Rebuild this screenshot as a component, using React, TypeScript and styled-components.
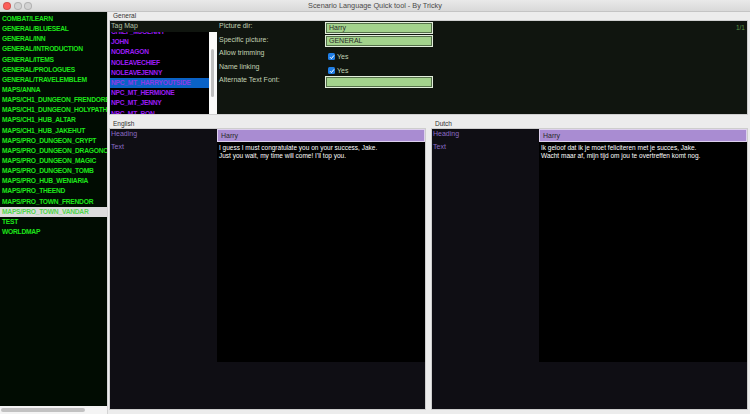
import styled, { createGlobalStyle } from "styled-components";

const GlobalStyle = createGlobalStyle`
	html, body {
		margin: 0;
		padding: 0;
		background: #ececec;
		overflow: hidden;
	}
	* {
		box-sizing: border-box;
	}
`;

const maps = [
	"COMBAT/LEARN",
	"GENERAL/BLUESEAL",
	"GENERAL/INN",
	"GENERAL/INTRODUCTION",
	"GENERAL/ITEMS",
	"GENERAL/PROLOGUES",
	"GENERAL/TRAVELEMBLEM",
	"MAPS/ANNA",
	"MAPS/CH1_DUNGEON_FRENDORBORDER",
	"MAPS/CH1_DUNGEON_HOLYPATH",
	"MAPS/CH1_HUB_ALTAR",
	"MAPS/CH1_HUB_JAKEHUT",
	"MAPS/PRO_DUNGEON_CRYPT",
	"MAPS/PRO_DUNGEON_DRAGONCAVE",
	"MAPS/PRO_DUNGEON_MAGIC",
	"MAPS/PRO_DUNGEON_TOMB",
	"MAPS/PRO_HUB_WENIARIA",
	"MAPS/PRO_THEEND",
	"MAPS/PRO_TOWN_FRENDOR",
	"MAPS/PRO_TOWN_VANDAR",
	"TEST",
	"WORLDMAP",
];

const tags = [
	"CHIEF_MJGENNY",
	"JOHN",
	"NODRAGON",
	"NOLEAVECHIEF",
	"NOLEAVEJENNY",
	"NPC_MT_HARRYOUTSIDE",
	"NPC_MT_HERMIONE",
	"NPC_MT_JENNY",
	"NPC_MT_RON",
];

const Window = styled.div`
	width: 750px;
	height: 414px;
	display: flex;
	flex-direction: column;
	font-family: "Liberation Sans", Arial, sans-serif;
	background: #ececec;
`;

const TitleBar = styled.div`
	height: 12px;
	display: grid;
	grid-template-columns: 60px 1fr 60px;
	align-items: center;
	background: linear-gradient(#e9e9e9, #d9d9d9);
	border-bottom: 1px solid #c4c4c4;
`;

const Lights = styled.div`
	display: flex;
	gap: 2.5px;
	padding-left: 3px;
`;

const Light = styled.span<{ $color: string }>`
	width: 8px;
	height: 8px;
	border-radius: 50%;
	background: ${(p) => p.$color};
	border: 0.5px solid rgba(0, 0, 0, 0.15);
`;

const Title = styled.div`
	text-align: center;
	font-size: 7.3px;
	color: #4a4a4a;
`;

const Body = styled.div`
	flex: 1;
	display: flex;
	min-height: 0;
`;

const Sidebar = styled.div`
	width: 108px;
	display: flex;
	flex-direction: column;
	border-right: 1px solid #d4d4d4;
`;

const MapList = styled.div`
	flex: 1;
	background: #010c02;
	padding-top: 2px;
	overflow: hidden;
`;

const MapItem = styled.div<{ $selected?: boolean }>`
	height: 10.15px;
	line-height: 10.15px;
	padding-left: 2px;
	font-size: 6.7px;
	letter-spacing: -0.25px;
	font-weight: bold;
	white-space: nowrap;
	overflow: hidden;
	color: ${(p) => (p.$selected ? "#52d64e" : "#1ee61a")};
	background: ${(p) => (p.$selected ? "#dcdcdc" : "transparent")};
`;

const HScroll = styled.div`
	height: 8px;
	background: #f4f4f4;
	padding: 2px 20px 2px 1px;
`;

const HThumb = styled.div`
	width: 84px;
	height: 4px;
	border-radius: 2px;
	background: #c2c2c2;
`;

const Main = styled.div`
	flex: 1;
	display: flex;
	flex-direction: column;
	padding: 0 2px 4px 1px;
	min-width: 0;
`;

const TabLabel = styled.div`
	height: 8px;
	font-size: 6.5px;
	line-height: 8px;
	color: #333;
	padding-left: 4px;
`;

const GeneralPanel = styled.div`
	height: 95px;
	display: flex;
	background: #10150f;
	border: 1px solid #cfcfcf;
	position: relative;
`;

const TagColumn = styled.div`
	width: 107px;
	display: flex;
	flex-direction: column;
`;

const TagHeader = styled.div`
	height: 11px;
	font-size: 7px;
	line-height: 10px;
	color: #b4c2a8;
	padding-left: 1px;
`;

const TagBox = styled.div`
	flex: 1;
	display: flex;
	min-height: 0;
`;

const TagList = styled.div`
	width: 99px;
	background: #000;
	overflow: hidden;
`;

const TagItem = styled.div<{ $selected?: boolean }>`
	height: 10.2px;
	line-height: 10.2px;
	padding-left: 1px;
	font-size: 6.7px;
	letter-spacing: -0.25px;
	font-weight: bold;
	white-space: nowrap;
	color: ${(p) => (p.$selected ? "#8b3be8" : "#9c1cf5")};
	background: ${(p) => (p.$selected ? "#0a62c6" : "transparent")};
	&:first-child {
		margin-top: -5px;
	}
`;

const VScroll = styled.div`
	width: 8px;
	background: #fafafa;
	padding: 17px 2px 0 2px;
`;

const VThumb = styled.div`
	height: 48px;
	width: 3px;
	border-radius: 2px;
	background: #c0c0c0;
`;

const Form = styled.div`
	display: grid;
	grid-template-columns: 106px 108px;
	grid-auto-rows: 13.6px;
	padding-left: 2px;
	align-items: center;
`;

const FieldLabel = styled.div`
	font-size: 7px;
	color: #c2d2b4;
	align-self: start;
	padding-top: 1px;
`;

const GreenInput = styled.div`
	height: 12px;
	background: #a3d28c;
	border: 1px solid #e2eedb;
	outline: 1px solid #55704a;
	outline-offset: -2px;
	font-size: 7px;
	line-height: 10px;
	color: #2b2b2b;
	padding-left: 3px;
`;

const CheckRow = styled.div`
	display: flex;
	align-items: center;
	gap: 2px;
	padding-left: 3px;
	padding-top: 4px;
	font-size: 7px;
	color: #c2d2b4;
`;

const CheckBox = styled.span`
	width: 7px;
	height: 7px;
	border-radius: 1.5px;
	background: #1f7ee6;
	display: flex;
	align-items: center;
	justify-content: center;
`;

const Counter = styled.div`
	position: absolute;
	top: 3px;
	right: 2px;
	font-size: 6.5px;
	color: #5f9a48;
`;

const LangRow = styled.div`
	flex: 1;
	display: grid;
	grid-template-columns: 1fr 1fr;
	gap: 5px;
	margin-top: 5px;
	min-height: 0;
`;

const LangColumn = styled.div`
	display: flex;
	flex-direction: column;
	min-height: 0;
`;

const LangPanel = styled.div`
	flex: 1;
	display: grid;
	grid-template-columns: 107px 1fr;
	grid-template-rows: 13px 220px;
	background: #0f0e14;
	border: 1px solid #cdcdcd;
`;

const LangLabel = styled.div`
	font-size: 7px;
	color: #8b6cc4;
	padding: 1px 0 0 1px;
`;

const HeadingInput = styled.div`
	background: #a98cd2;
	border: 1px solid #ddd0ee;
	font-size: 7px;
	line-height: 11px;
	color: #2a2a2a;
	padding-left: 3px;
`;

const TextArea = styled.div`
	background: #000;
	color: #ffffff;
	font-size: 6.5px;
	line-height: 7.7px;
	padding: 2px 0 0 2px;
	white-space: pre-line;
`;

const Check = () => (
	<CheckBox>
		<svg width="6" height="6" viewBox="0 0 6 6">
			<path d="M1 3.2 L2.4 4.6 L5 1.4" stroke="#fff" strokeWidth="1" fill="none" />
		</svg>
	</CheckBox>
);

const Language = ({ name, text }: { name: string; text: string }) => (
	<LangColumn>
		<TabLabel>{name}</TabLabel>
		<LangPanel>
			<LangLabel>Heading</LangLabel>
			<HeadingInput>Harry</HeadingInput>
			<LangLabel>Text</LangLabel>
			<TextArea>{text}</TextArea>
		</LangPanel>
	</LangColumn>
);

const App = () => {
	return (
		<Window>
			<GlobalStyle />
			<TitleBar>
				<Lights>
					<Light $color="#fc605b" />
					<Light $color="#d2d2d2" />
					<Light $color="#d2d2d2" />
				</Lights>
				<Title>Scenario Language Quick tool - By Tricky</Title>
				<span />
			</TitleBar>
			<Body>
				<Sidebar>
					<MapList>
						{maps.map((m) => (
							<MapItem key={m} $selected={m === "MAPS/PRO_TOWN_VANDAR"}>
								{m}
							</MapItem>
						))}
					</MapList>
					<HScroll>
						<HThumb />
					</HScroll>
				</Sidebar>
				<Main>
					<TabLabel>General</TabLabel>
					<GeneralPanel>
						<TagColumn>
							<TagHeader>Tag Map</TagHeader>
							<TagBox>
								<TagList>
									{tags.map((t) => (
										<TagItem key={t} $selected={t === "NPC_MT_HARRYOUTSIDE"}>
											{t}
										</TagItem>
									))}
								</TagList>
								<VScroll>
									<VThumb />
								</VScroll>
							</TagBox>
						</TagColumn>
						<Form>
							<FieldLabel>Picture dir:</FieldLabel>
							<GreenInput>Harry</GreenInput>
							<FieldLabel>Specific picture:</FieldLabel>
							<GreenInput>GENERAL</GreenInput>
							<FieldLabel>Allow trimming</FieldLabel>
							<CheckRow>
								<Check />
								Yes
							</CheckRow>
							<FieldLabel>Name linking</FieldLabel>
							<CheckRow>
								<Check />
								Yes
							</CheckRow>
							<FieldLabel>Alternate Text Font:</FieldLabel>
							<GreenInput />
						</Form>
						<Counter>1/1</Counter>
					</GeneralPanel>
					<LangRow>
						<Language
							name="English"
							text={"I guess I must congratulate you on your success, Jake.\nJust you wait, my time will come! I'll top you."}
						/>
						<Language
							name="Dutch"
							text={"Ik geloof dat ik je moet feliciteren met je succes, Jake.\nWacht maar af, mijn tijd om jou te overtreffen komt nog."}
						/>
					</LangRow>
				</Main>
			</Body>
		</Window>
	);
};

export default App;
